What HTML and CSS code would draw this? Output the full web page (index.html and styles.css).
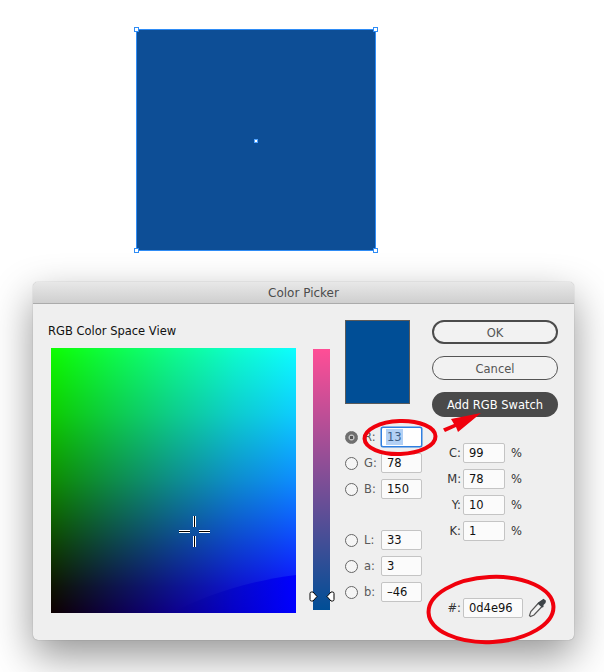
FILE: index.html
```html
<!DOCTYPE html>
<html lang="en">
<head>
<meta charset="utf-8">
<title>Color Picker</title>
<link rel="stylesheet" href="styles.css">
</head>
<body>
<div class="page">
  <div class="shape">
    <span class="handle tl"></span><span class="handle tr"></span>
    <span class="handle bl"></span><span class="handle br"></span>
    <span class="center"></span>
  </div>
  <div class="dialog">
    <div class="titlebar">Color Picker</div>
    <div class="content">
      <div class="col-field">
        <div class="heading">RGB Color Space View</div>
        <div class="field">
          <svg class="field-band" width="245" height="265" viewBox="0 0 245 265" aria-hidden="true">
            <defs>
              <linearGradient id="band" x1="0" x2="1" y1="0" y2="0">
                <stop offset="0" stop-color="#00007d" stop-opacity="0"/>
                <stop offset=".5" stop-color="#0000c8" stop-opacity=".6"/>
                <stop offset="1" stop-color="#0000ff" stop-opacity="1"/>
              </linearGradient>
            </defs>
            <path d="M120 265 C150 250 190 234 245 227V265Z" fill="url(#band)"/>
          </svg>
          <svg class="crosshair" width="31" height="31" viewBox="0 0 31 31" aria-hidden="true">
            <path d="M0 14.500h11M0 16.500h11M20 14.500h11M20 16.500h11M14.500 0v11M16.500 0v11M14.500 20v11M16.500 20v11" stroke="#fff" stroke-width="1" fill="none"/>
            <path d="M0 15.500h11M20 15.500h11M15.500 0v11M15.500 20v11" stroke="#000" stroke-width="1" fill="none"/>
          </svg>
        </div>
      </div>
      <div class="slider">
        <svg class="slider-handles" width="26" height="11" viewBox="0 0 26 11" aria-hidden="true">
          <path d="M1 2.500Q1 1 2.500 1H4L8 5.500 4 10H2.500Q1 10 1 8.500Z" fill="#fff" stroke="#000"/>
          <path d="M25 2.500Q25 1 23.500 1H22L18 5.500 22 10H23.500Q25 10 25 8.500Z" fill="#fff" stroke="#000"/>
        </svg>
      </div>
      <div class="col-mid">
        <div class="swatch"></div>
        <div class="group rgb">
          <div class="row"><span class="radio on"></span><span class="lbl">R:</span><div class="inp focus"><span class="sel">13</span></div></div>
          <div class="row"><span class="radio"></span><span class="lbl">G:</span><div class="inp">78</div></div>
          <div class="row"><span class="radio"></span><span class="lbl">B:</span><div class="inp">150</div></div>
        </div>
        <div class="group lab">
          <div class="row"><span class="radio"></span><span class="lbl">L:</span><div class="inp">33</div></div>
          <div class="row"><span class="radio"></span><span class="lbl">a:</span><div class="inp">3</div></div>
          <div class="row"><span class="radio"></span><span class="lbl">b:</span><div class="inp">–46</div></div>
        </div>
      </div>
      <div class="col-right">
        <div class="btn primary">OK</div>
        <div class="btn">Cancel</div>
        <div class="btn dark">Add RGB Swatch</div>
        <div class="group cmyk">
          <div class="row"><span class="lbl end">C:</span><div class="inp">99</div><span class="pct">%</span></div>
          <div class="row"><span class="lbl end">M:</span><div class="inp">78</div><span class="pct">%</span></div>
          <div class="row"><span class="lbl end">Y:</span><div class="inp">10</div><span class="pct">%</span></div>
          <div class="row"><span class="lbl end">K:</span><div class="inp">1</div><span class="pct">%</span></div>
        </div>
        <div class="row hex">
          <span class="lbl end">#:</span><div class="inp wide">0d4e96</div>
          <svg class="dropper" width="19" height="20" viewBox="0 0 19 20" aria-hidden="true">
            <path d="M11 4.500 2.800 13.500 1.500 17.500 2.500 18.500 6 17 14.500 8" fill="#f2f2f2" stroke="#555" stroke-width="1.200"/>
            <path d="M10 5 11.500 3.500 13 2.500 15.500 .8 18 2.800 17.500 5 15.500 7 15.500 9 14 9.500 9.500 5.500Z" fill="#3d4347"/>
          </svg>
        </div>
      </div>
    </div>
  </div>
  <svg class="marks" width="604" height="672" viewBox="0 0 604 672" aria-hidden="true">
    <ellipse cx="400" cy="437.500" rx="35.500" ry="16.500" transform="rotate(-2 400 437.500)" fill="none" stroke="#f0000c" stroke-width="4"/>
    <ellipse cx="491" cy="609.500" rx="62.500" ry="32.500" transform="rotate(-3 491 609.500)" fill="none" stroke="#f0000c" stroke-width="4"/>
    <path d="M443 428.500 454 424 451 419 481 413 458 432 456 427 445 432Z" fill="#f0000c"/>
  </svg>
</div>
</body>
</html>
```

FILE: styles.css
```css
* { box-sizing: border-box; }
html, body { margin: 0; padding: 0; background: #fff; }
.page {
  position: relative;
  width: 604px;
  height: 672px;
  overflow: hidden;
  padding-top: 29px;
  font-family: "DejaVu Sans", "Liberation Sans", sans-serif;
  font-size: 11px;
  color: #111;
}
.shape {
  position: relative;
  width: 240px;
  height: 222px;
  margin-left: 136px;
  background: #0d4e96;
  border: 1px solid #2f8cf5;
}
.handle {
  position: absolute;
  width: 5px;
  height: 5px;
  background: #fff;
  border: 1px solid #2f8cf5;
}
.tl { left: -3px; top: -3px; }
.tr { right: -3px; top: -3px; }
.bl { left: -3px; bottom: -3px; }
.br { right: -3px; bottom: -3px; }
.center {
  position: absolute;
  left: 117px;
  top: 109px;
  width: 4px;
  height: 4px;
  background: #fff;
  border: 1px solid #4ea2ff;
}
.dialog {
  width: 541px;
  height: 358px;
  margin: 31px 0 0 33px;
  background: #efefef;
  border-radius: 5px;
  box-shadow: 0 0 1px rgba(0,0,0,.45), 0 16px 40px rgba(0,0,0,.42);
  overflow: hidden;
}
.titlebar {
  height: 22px;
  line-height: 22px;
  text-align: center;
  font-size: 12px;
  color: #4c4c4c;
  background: linear-gradient(#e8e8e8, #cfcfcf);
  border-bottom: 1px solid #ababab;
}
.content {
  display: flex;
  padding: 16px 0 0 15px;
}
.col-field { width: 248px; }
.heading {
  height: 22px;
  line-height: 22px;
  margin-bottom: 6px;
  font-size: 11.500px;
  color: #111;
}
.field {
  position: relative;
  width: 245px;
  height: 265px;
  margin-left: 3px;
  background-color: #000;
  background-image:
    linear-gradient(to right, #000 0%, #000048 25%, #00008c 50%, #0000cc 75%, #00f 100%),
    linear-gradient(to bottom, #0f0 0%, #00f500 4%, #00cc00 25%, #008c00 50%, #004000 75%, #001400 90%, #000 100%),
    linear-gradient(#0d0000, #0d0000);
  background-blend-mode: screen, screen, normal;
}
.field-band {
  position: absolute;
  left: 0;
  top: 0;
}
.crosshair {
  position: absolute;
  left: 128px;
  top: 168px;
}
.slider {
  position: relative;
  width: 17px;
  height: 261px;
  margin: 29px 0 0 17px;
  background: linear-gradient(to bottom, #ff4e96, #004e96);
}
.slider-handles {
  position: absolute;
  left: -4px;
  top: 242px;
}
.col-mid {
  width: 77px;
  margin-left: 15px;
}
.swatch {
  width: 65px;
  height: 84px;
  background: #004e96;
  border: 1px solid #5a5a5a;
}
.group { display: flex; flex-direction: column; gap: 6px; }
.rgb { margin-top: 23px; }
.lab { margin-top: 31px; }
.row { display: flex; align-items: center; height: 20px; }
.radio {
  flex: none;
  width: 13px;
  height: 13px;
  border: 1px solid #666;
  border-radius: 50%;
  background: #f5f5f5;
}
.radio.on {
  border-color: #6f6f6f;
  background: radial-gradient(circle, #555 0 1.500px, #c4c4c4 2px 2.500px, #6f6f6f 3.500px);
}
.lbl {
  width: 23px;
  padding-left: 6px;
  font-size: 11.500px;
  color: #5a5a5a;
}
.inp {
  width: 41px;
  height: 20px;
  line-height: 19px;
  padding-left: 5px;
  font-size: 11.500px;
  color: #111;
  background: #fbfbfb;
  border: 1px solid #c4c4c4;
  border-radius: 2px;
}
.inp.focus {
  border-color: #2f7fe0;
  box-shadow: 0 0 0 .5px #2f7fe0;
  color: #3d5d85;
  background: #fff;
}
.sel {
  display: inline-block;
  height: 16px;
  line-height: 16px;
  margin: 1px 0 0 -1px;
  padding: 0 1px;
  background: #b2d0f5;
  vertical-align: top;
}
.col-right {
  width: 126px;
  margin-left: 10px;
}
.btn {
  height: 24px;
  line-height: 24px;
  margin-bottom: 12px;
  text-align: center;
  font-size: 11.500px;
  color: #555;
  border: 1px solid #555;
  border-radius: 12px;
  background: #f2f2f2;
}
.btn.primary { border-width: 2px; line-height: 22px; border-color: #4c4c4c; }
.btn.dark {
  height: 25px;
  line-height: 27px;
  margin-bottom: 0;
  color: #fff;
  background: #4a4a4a;
  border: 0;
  border-radius: 13px;
}
.cmyk { margin-top: 26px; }
.lbl.end {
  width: 31px;
  padding: 0 2px 0 0;
  text-align: right;
  color: #333;
}
.cmyk .inp { width: 42px; }
.pct { margin-left: 6px; font-size: 11.500px; color: #333; }
.hex { margin-top: 57px; }
.inp.wide { width: 60px; }
.dropper { margin-left: 5px; flex: none; }
.marks {
  position: absolute;
  left: 0;
  top: 0;
  pointer-events: none;
}
```
